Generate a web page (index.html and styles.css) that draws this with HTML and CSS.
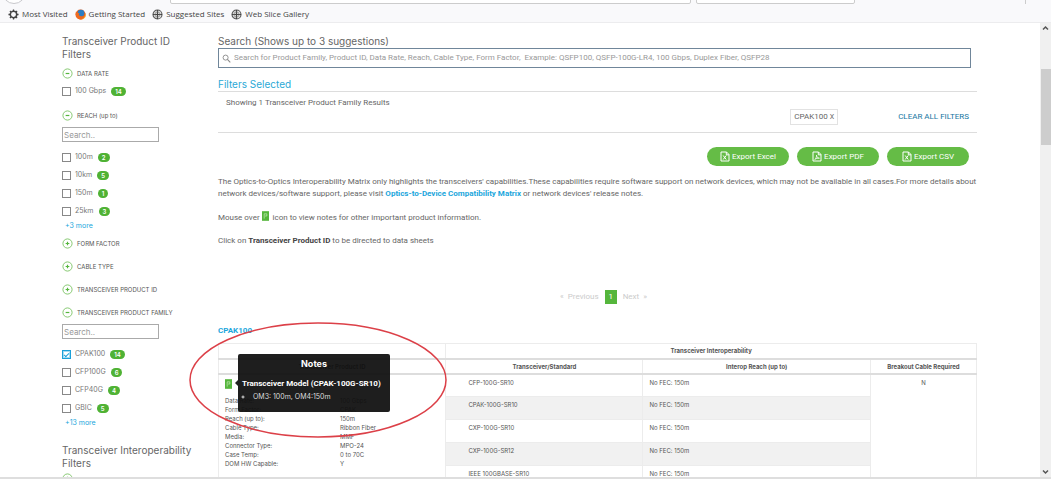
FILE: index.html
```
<!DOCTYPE html>
<html lang="en">
<head>
<meta charset="utf-8">
<title>Optics-to-Optics Interoperability Matrix</title>
<link rel="stylesheet" href="styles.css">
</head>
<body>
<svg class="defs" aria-hidden="true">
  <symbol id="minus" viewBox="0 0 12 12"><circle cx="6" cy="6" r="5" fill="none" stroke="#7cc465"/><path d="M4 6h4" stroke="#55b63c" stroke-width="1.3"/></symbol>
  <symbol id="plus" viewBox="0 0 12 12"><circle cx="6" cy="6" r="5" fill="none" stroke="#7cc465"/><path d="M4 6h4M6 4v4" stroke="#55b63c" stroke-width="1.3"/></symbol>
  <symbol id="globe" viewBox="0 0 12 12"><circle cx="6" cy="6" r="4.9" fill="#e4e4e4" stroke="#555" stroke-width="1.2"/><path d="M6 1v10M1 6h10" stroke="#444" stroke-width="1.3"/><path d="M6 3.2a2.8 2.8 0 0 1 0 5.600a2.800 2.800 0 0 1 0-5.600" fill="none" stroke="#777" stroke-width=".7"/></symbol>
  <symbol id="note" viewBox="0 0 8 11"><path d="M0 0h8v11H0z" fill="#55b63c"/><path d="M2.500 8.500V3h3v2.500H3.500" fill="none" stroke="#c5eab8" stroke-width=".8"/></symbol>
  <symbol id="sheet" viewBox="0 0 10 11"><path d="M1 1h5.500L9 3.500V10H1zM6.300 1v2.800H9" fill="none" stroke="#fff"/><path d="M3.200 4.500l3 4M6.200 4.500l-3 4" stroke="#fff"/></symbol>
  <symbol id="pdf" viewBox="0 0 10 11"><path d="M1 1h5.500L9 3.500V10H1zM6.300 1v2.800H9" fill="none" stroke="#fff"/><path d="M2.800 8.500C4 7.500 4.800 5.500 4.500 4.200c.3 2 1.300 2.800 2.900 3C5.500 7 4 7.500 2.800 8.500z" fill="none" stroke="#fff" stroke-width=".8"/></symbol>
</svg>

<header class="browser">
  <div class="navbar"><span class="back"></span><span class="address"></span><span class="find"></span><span class="divider"></span></div>
  <nav class="bookmarks">
    <a href="#"><svg viewBox="0 0 12 12"><circle cx="6" cy="6" r="3.500" fill="none" stroke="#444" stroke-width="1.600"/><path d="M6 .5v2M6 9.500v2M.5 6h2M9.500 6h2M2.100 2.100l1.400 1.400M8.500 8.500l1.400 1.400M9.900 2.100L8.500 3.500M3.500 8.500L2.100 9.900" stroke="#444" stroke-width="1.400"/></svg>Most Visited</a>
    <a href="#"><svg viewBox="0 0 12 12"><circle cx="6" cy="6" r="5.500" fill="#e8601c"/><circle cx="6.500" cy="4.500" r="3.700" fill="#2b7ec4"/><path d="M1 3C.2 7 2 11.500 6 11.500S11.800 8 11.300 4c-.8 3.500-3 4.500-4.800 4C4 7.500 3.500 6 5 5L3 4z" fill="#ee6a1f"/><path d="M11.300 4c.2 4-1.800 6.500-5 7.500 5 .3 6.500-4 5-7.500z" fill="#f9b233"/></svg>Getting Started</a>
    <a href="#"><svg><use href="#globe"/></svg>Suggested Sites</a>
    <a href="#"><svg><use href="#globe"/></svg>Web Slice Gallery</a>
  </nav>
</header>

<div class="viewport">
  <aside class="sidebar">
    <h2>Transceiver Product ID Filters</h2>
    <button class="group"><svg><use href="#minus"/></svg>DATA RATE</button>
    <div class="options single">
      <label><input type="checkbox">100 Gbps<span class="count">14</span></label>
    </div>
    <button class="group"><svg><use href="#minus"/></svg>REACH (up to)</button>
    <input class="mini" type="text" placeholder="Search.." aria-label="Search reach">
    <div class="options">
      <label><input type="checkbox">100m<span class="count">2</span></label>
      <label><input type="checkbox">10km<span class="count">5</span></label>
      <label><input type="checkbox">150m<span class="count">1</span></label>
      <label><input type="checkbox">25km<span class="count">3</span></label>
    </div>
    <a class="more" href="#">+3 more</a>
    <button class="group"><svg><use href="#plus"/></svg>FORM FACTOR</button>
    <button class="group"><svg><use href="#plus"/></svg>CABLE TYPE</button>
    <button class="group"><svg><use href="#plus"/></svg>TRANSCEIVER PRODUCT ID</button>
    <button class="group"><svg><use href="#minus"/></svg>TRANSCEIVER PRODUCT FAMILY</button>
    <input class="mini" type="text" placeholder="Search.." aria-label="Search product family">
    <div class="options">
      <label><input type="checkbox" checked>CPAK100<span class="count">14</span></label>
      <label><input type="checkbox">CFP100G<span class="count">6</span></label>
      <label><input type="checkbox">CFP40G<span class="count">4</span></label>
      <label><input type="checkbox">GBIC<span class="count">5</span></label>
    </div>
    <a class="more" href="#">+13 more</a>
    <h2 class="second">Transceiver Interoperability Filters</h2>
    <button class="group last" aria-label="Expand filters"><svg><use href="#plus"/></svg></button>
  </aside>

  <main class="content">
    <label class="search-label" for="q">Search (Shows up to 3 suggestions)</label>
    <div class="search">
      <svg viewBox="0 0 10 10"><circle cx="4" cy="4" r="2.800" fill="none" stroke="#888"/><path d="M6 6l3.200 3.200" stroke="#888" stroke-width="1.200"/></svg>
      <input id="q" type="text" placeholder="Search for Product Family, Product ID, Data Rate, Reach, Cable Type, Form Factor,  Example: QSFP100, QSFP-100G-LR4, 100 Gbps, Duplex Fiber, QSFP28">
    </div>
    <h3 class="selected-title">Filters Selected</h3>
    <section class="selected">
      <p>Showing 1 Transceiver Product Family Results</p>
      <div class="selected-row">
        <button class="chip">CPAK100 <span>X</span></button>
        <a class="clear" href="#">CLEAR ALL FILTERS</a>
      </div>
    </section>
    <div class="exports">
      <button><svg><use href="#sheet"/></svg>Export Excel</button>
      <button><svg><use href="#pdf"/></svg>Export PDF</button>
      <button><svg><use href="#sheet"/></svg>Export CSV</button>
    </div>
    <div class="intro">
      <p>The Optics-to-Optics Interoperability Matrix only highlights the transceivers' capabilities.These capabilities require software support on network devices, which may not be available in all cases.For more details about network devices/software support, please visit <a href="#">Optics-to-Device Compatibility Matrix</a> or network devices' release notes.</p>
      <p>Mouse over <svg class="note"><use href="#note"/></svg>&nbsp; icon to view notes for other important product information.</p>
      <p>Click on <b>Transceiver Product ID</b> to be directed to data sheets</p>
    </div>
    <nav class="pager"><span>«&nbsp; Previous</span><a href="#">1</a><span>Next &nbsp;»</span></nav>
    <section class="family">
      <h3>CPAK100</h3>
      <table>
        <colgroup><col class="c-id"><col class="c-std"><col class="c-reach"><col class="c-cable"></colgroup>
        <thead>
          <tr><th></th><th colspan="3">Transceiver Interoperability</th></tr>
          <tr><th>Transceiver Product ID</th><th>Transceiver/Standard</th><th>Interop Reach (up to)</th><th>Breakout Cable Required</th></tr>
        </thead>
        <tbody>
          <tr>
            <td class="product" rowspan="5">
              <svg class="note"><use href="#note"/></svg>
              <dl>
                <dt>Data Rate:</dt><dd>100 Gbps</dd>
                <dt>Form Factor:</dt><dd>CPAK</dd>
                <dt>Reach (up to):</dt><dd>150m</dd>
                <dt>Cable Type:</dt><dd>Ribbon Fiber</dd>
                <dt>Media:</dt><dd>MMF</dd>
                <dt>Connector Type:</dt><dd>MPO-24</dd>
                <dt>Case Temp:</dt><dd>0 to 70C</dd>
                <dt>DOM HW Capable:</dt><dd>Y</dd>
              </dl>
            </td>
            <td class="std">CFP-100G-SR10</td><td>No FEC: 150m</td><td class="cable" rowspan="5">N</td>
          </tr>
          <tr class="alt"><td class="std">CPAK-100G-SR10</td><td>No FEC: 150m</td></tr>
          <tr><td class="std">CXP-100G-SR10</td><td>No FEC: 150m</td></tr>
          <tr class="alt"><td class="std">CXP-100G-SR12</td><td>No FEC: 150m</td></tr>
          <tr><td class="std">IEEE 100GBASE-SR10</td><td>No FEC: 150m</td></tr>
        </tbody>
      </table>
      <div class="tooltip" role="tooltip">
        <h4>Notes</h4>
        <strong>Transceiver Model (CPAK-100G-SR10)</strong>
        <ul><li>OM3: 100m, OM4:150m</li></ul>
      </div>
      <svg class="ellipse" viewBox="0 0 258 116"><ellipse cx="129" cy="58" rx="128" ry="57" fill="none" stroke="#dc4048" stroke-width="1.500"/></svg>
    </section>
  </main>

  <div class="scrollbar">
    <svg viewBox="0 0 11 10"><path d="M3 6.500L5.500 4 8 6.500" fill="none" stroke="#555" stroke-width="1.500"/></svg>
    <span class="thumb"></span>
    <svg class="down" viewBox="0 0 11 10"><path d="M3 3.500L5.500 6 8 3.500" fill="none" stroke="#555" stroke-width="1.500"/></svg>
  </div>
</div>
</body>
</html>
```
FILE: styles.css
```
* { box-sizing: border-box; }
body {
  margin: 0;
  height: 100vh;
  display: flex;
  flex-direction: column;
  overflow: hidden;
  border-bottom: 2px solid #dedede;
  background: #fff;
  color: #666;
  font: 8px/12px Roboto, "Liberation Sans", sans-serif;
}
h2, h3, h4, p, ul, dl, dd { margin: 0; padding: 0; font-weight: 400; }
button, input { font: inherit; color: inherit; margin: 0; padding: 0; border: 0; background: none; }
a { color: #1ba6dc; text-decoration: none; }
.defs { position: absolute; width: 0; height: 0; }

/* Browser toolbar */
.browser { flex: none; height: 23px; background: #f9f9fb; border-bottom: 1px solid #ececee; }
.navbar { height: 4px; display: flex; align-items: flex-end; overflow: hidden; }
.back { width: 24px; height: 24px; margin-left: 2px; border: 1px solid #c8c8cc; border-radius: 50%; background: #fff; }
.address, .find { height: 12px; border: 1px solid #ccc; border-radius: 2px; background: #fff; }
.address { flex: 1; margin-left: 144px; }
.find { width: 159px; margin-left: 5px; }
.divider { width: 1px; height: 4px; margin: 0 25px 0 170px; background: #ccc; }
.bookmarks { display: flex; gap: 7px; padding: 4px 8px; font: 8px/12px "Open Sans", sans-serif; }
.bookmarks a { display: flex; align-items: center; gap: 3px; color: #444; }
.bookmarks svg { width: 11px; height: 11px; }

.viewport { flex: 1; min-height: 0; display: flex; overflow: hidden; }

/* Filter column */
.sidebar { flex: none; width: 218px; padding: 12px 20px 0 62px; font-family: Inter, "Liberation Sans", sans-serif; }
.sidebar h2 { font-size: 10px; line-height: 13px; margin-bottom: 1px; width: 134px; }
.sidebar h2.second { margin-top: 15px; }
.group { display: flex; align-items: center; gap: 4px; height: 23px; font-size: 6px; white-space: nowrap; color: #555; }
.group svg { width: 11px; height: 11px; }
.last { height: 15px; }
.mini { display: block; width: 97px; height: 15px; border: 1px solid #aaa; padding-left: 1px; margin-bottom: 6px; }
.single { padding-bottom: 4px; margin-top: -3px; }
.options label { display: flex; align-items: center; height: 18px; color: #777; font-size: 7px; }
.options input { appearance: none; width: 9px; height: 9px; margin-right: 4px; border: 1px solid #888; display: grid; place-items: center; }
.options input:checked { border: 1px solid #1ba0d8; box-shadow: inset 0 0 0 1px #a5daf1; }
.options input:checked::after { content: ""; width: 4px; height: 2px; border: solid #1ba0d8; border-width: 0 0 1px 1px; transform: rotate(-45deg); }
.count { margin-left: 5px; padding: 0 4px; border-radius: 5px; background: #4fb234; color: #fff; font-weight: 600; font-size: 6px; line-height: 9px; }
.more { display: block; margin-left: 3px; font-size: 7px; }
::placeholder { color: #999; opacity: 1; }

/* Main column */
.content { flex: 1; min-width: 0; padding: 12px 63px 0 0; }
.search-label { display: block; font: 10px/13px Inter, "Liberation Sans", sans-serif; }
.search { display: flex; align-items: center; gap: 3px; height: 20px; margin-right: 6px; padding-left: 3px; border: 1px solid #70869a; }
.search svg { width: 9px; height: 9px; flex: none; }
.search input { flex: 1; min-width: 0; outline: 0; }
.selected-title { color: #2ba9d6; font: 10px/14px Inter, "Liberation Sans", sans-serif; padding: 9px 0 0; border-bottom: 1px solid #ddd; }
.selected { padding: 5px 8px 7px; border-bottom: 1px solid #ddd; }
.selected-row { display: flex; justify-content: flex-end; align-items: center; gap: 60px; }
.chip { height: 16px; padding: 0 3px; border: 1px solid #e2e2e2; }
.chip span { font-size: 7px; }
.clear { color: #16769f; }
.exports { display: flex; justify-content: flex-end; gap: 8px; padding: 14px 8px 10px 0; }
.exports button { display: flex; align-items: center; justify-content: center; gap: 2px; width: 82px; height: 19px; border-radius: 10px; background: #65bc46; color: #fff; }
.exports svg { width: 10px; height: 11px; }
.intro p { margin-bottom: 11px; }
.intro a { font-weight: 700; }
.intro b { color: #444; }
.note { width: 7px; height: 10px; vertical-align: -1px; }
.pager { display: flex; justify-content: center; gap: 6px; margin: 43px 0 20px; padding-left: 12px; line-height: 14px; color: #ccc; }
.pager a { width: 12px; text-align: center; background: #55b63c; color: #fff; }

/* Results */
.family { position: relative; font-family: Inter, "Liberation Sans", sans-serif; }
.family h3 { color: #1ba6dc; font: 700 8px/14px Roboto, "Liberation Sans", sans-serif; margin-bottom: 5px; }
table { width: 100%; table-layout: fixed; border-collapse: collapse; font-size: 6px; line-height: 9px; color: #555; }
.c-id { width: 30%; } .c-std { width: 26%; } .c-reach { width: 30%; } .c-cable { width: 14%; }
th, td { border: 1px solid #ececec; text-align: left; vertical-align: top; }
th { height: 15px; padding: 0; text-align: center; vertical-align: middle; border-bottom: 2px solid #ddd; font-weight: 700; }
td { height: 23px; padding: 3px 6px; }
td.std { padding-left: 22px; }
td.cable { text-align: center; }
.alt td { background: #f1f1f1; }
.product dl { display: grid; grid-template-columns: 115px 1fr; margin-top: 7px; }
.product .note { display: block; margin-top: 1px; }
.tooltip { position: absolute; left: 20px; top: 30px; width: 152px; height: 58px; padding: 3px 4px; border-radius: 2px; background: rgba(16, 16, 16, .94); color: #fff; white-space: nowrap; }
.tooltip::before { content: ""; position: absolute; left: -3px; top: 26px; border: solid transparent; border-width: 3px 3px 3px 0; border-right-color: #222; }
.tooltip h4 { font-size: 9px; line-height: 14px; font-weight: 700; text-align: center; margin-bottom: 6px; }
.tooltip strong { display: block; font: 700 8px/14px Roboto, "Liberation Sans", sans-serif; }
.tooltip ul { padding-left: 11px; list-style: circle; font-size: 7px; color: #ddd; }
.ellipse { position: absolute; left: -29px; top: -2px; width: 258px; height: 116px; pointer-events: none; }

/* Page scrollbar */
.scrollbar { flex: none; width: 11px; display: flex; flex-direction: column; align-items: center; background: #f0f0f0; }
.scrollbar svg { width: 11px; height: 10px; }
.thumb { width: 10px; height: 76px; margin-top: 36px; background: #cdcdcd; }
.down { margin-top: auto; }
```
